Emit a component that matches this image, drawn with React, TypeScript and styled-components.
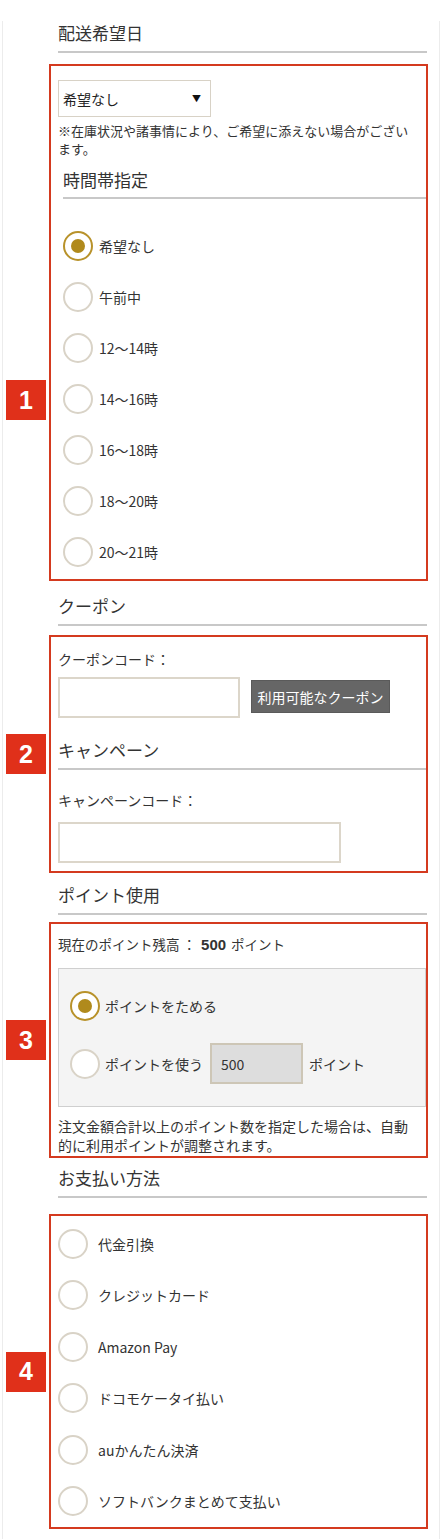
import styled, { createGlobalStyle } from "styled-components";

const GlobalStyle = createGlobalStyle`
  html, body {
    margin: 0;
    padding: 0;
    background: #fff;
  }
  body {
    font-family: "Noto Sans CJK JP", "Noto Sans", sans-serif;
    color: #333;
  }
  * {
    box-sizing: border-box;
  }
`;

const timeSlots = ["希望なし", "午前中", "12〜14時", "14〜16時", "16〜18時", "18〜20時", "20〜21時"];
const payments = [
  "代金引換",
  "クレジットカード",
  "Amazon Pay",
  "ドコモケータイ払い",
  "auかんたん決済",
  "ソフトバンクまとめて支払い",
];

export default function App() {
  return (
    <>
      <GlobalStyle />
      <Page>
        <SectionTitle $top={21}>配送希望日</SectionTitle>
        <Box $top={11}>
          <Badge $top={314}>1</Badge>
          <SelectBox>
            <span>希望なし</span>
            <Caret>▼</Caret>
          </SelectBox>
          <Note $size={13} $line={18} $top={5} $right={10}>
            ※在庫状況や諸事情により、ご希望に添えない場合がございます。
          </Note>
          <SubTitle $indent={5} $top={10} $bottom={5}>
            時間帯指定
          </SubTitle>
          <RadioList $top={21} $indent={5}>
            {timeSlots.map((t, i) => (
              <RadioRow key={t} $height={51} $gap={6}>
                <Radio $checked={i === 0} />
                <Label>{t}</Label>
              </RadioRow>
            ))}
          </RadioList>
          <Spacer $h={2} />
        </Box>

        <SectionTitle $top={13}>クーポン</SectionTitle>
        <Box $top={9}>
          <Badge>2</Badge>
          <FieldLabel $top={12}>クーポンコード：</FieldLabel>
          <InputRow $top={8}>
            <TextInput $width={182} readOnly />
            <DarkButton>利用可能なクーポン</DarkButton>
          </InputRow>
          <SubTitle $indent={0} $top={20} $bottom={6}>
            キャンペーン
          </SubTitle>
          <FieldLabel $top={20}>キャンペーンコード：</FieldLabel>
          <InputRow $top={12}>
            <TextInput $width={283} readOnly />
          </InputRow>
          <Spacer $h={8} />
        </Box>

        <SectionTitle $top={10}>ポイント使用</SectionTitle>
        <Box $top={7}>
          <Badge>3</Badge>
          <Balance>
            現在のポイント残高 ： <strong>500</strong> ポイント
          </Balance>
          <PointPanel>
            <RadioRow $height={41} $gap={5}>
              <Radio $checked />
              <Label>ポイントをためる</Label>
            </RadioRow>
            <RadioRow $height={41} $gap={5}>
              <Radio />
              <Label>ポイントを使う</Label>
              <PointInput value="500" readOnly />
              <Label>ポイント</Label>
            </RadioRow>
          </PointPanel>
          <Note $size={14} $line={19} $top={10} $right={8}>
            注文金額合計以上のポイント数を指定した場合は、自動的に利用ポイントが調整されます。
          </Note>
          <Spacer $h={1} />
        </Box>

        <SectionTitle $top={8}>お支払い方法</SectionTitle>
        <Box $top={16}>
          <Badge>4</Badge>
          <RadioList $top={2} $indent={0}>
            {payments.map((p) => (
              <RadioRow key={p} $height={51.5} $gap={10}>
                <Radio />
                <Label>{p}</Label>
              </RadioRow>
            ))}
          </RadioList>
        </Box>
      </Page>
    </>
  );
}

const Page = styled.div`
  width: 438px;
  min-height: 1539px;
  margin-left: 2px;
  padding: 0 11px 0 46px;
  border-left: 1px solid #ececec;
  border-right: 1px solid #ececec;
`;

const SectionTitle = styled.h2<{ $top: number }>`
  margin: ${(p) => p.$top}px 1px 0 9px;
  padding-bottom: 6px;
  font-size: 17px;
  line-height: 24px;
  font-weight: normal;
  color: #333;
  border-bottom: 2px solid #c8c8c8;
`;

const Box = styled.div<{ $top: number }>`
  position: relative;
  margin-top: ${(p) => p.$top}px;
  padding-left: 7px;
  border: 2px solid #d43a1f;
`;

const Badge = styled.div<{ $top?: number }>`
  position: absolute;
  left: -45px;
  top: ${(p) => (p.$top !== undefined ? `${p.$top}px` : "50%")};
  transform: ${(p) => (p.$top !== undefined ? "none" : "translateY(-50%)")};
  width: 40px;
  height: 40px;
  display: flex;
  align-items: center;
  justify-content: center;
  background: #e0301a;
  color: #fff;
  font-family: "Liberation Sans", Arial, sans-serif;
  font-weight: bold;
  font-size: 25px;
`;

const SelectBox = styled.div`
  margin-top: 14px;
  width: 153px;
  height: 37px;
  display: flex;
  align-items: center;
  justify-content: space-between;
  padding: 0 9px 0 4px;
  border: 1px solid #d8d2c6;
  font-size: 14px;
  color: #222;
`;

const Caret = styled.span`
  font-size: 9px;
  color: #111;
`;

const Note = styled.p<{ $size: number; $line: number; $top: number; $right: number }>`
  margin: ${(p) => p.$top}px 0 0;
  padding-right: ${(p) => p.$right}px;
  font-size: ${(p) => p.$size}px;
  line-height: ${(p) => p.$line}px;
  color: #333;
`;

const SubTitle = styled.h3<{ $indent: number; $top: number; $bottom: number }>`
  margin: ${(p) => p.$top}px 0 0 ${(p) => p.$indent}px;
  padding-bottom: ${(p) => p.$bottom}px;
  font-size: 17px;
  line-height: 24px;
  font-weight: normal;
  color: #333;
  border-bottom: 2px solid #c8c8c8;
`;

const RadioList = styled.div<{ $top: number; $indent: number }>`
  margin: ${(p) => p.$top}px 0 0 ${(p) => p.$indent}px;
  display: flex;
  flex-direction: column;
`;

const RadioRow = styled.div<{ $height: number; $gap: number }>`
  height: ${(p) => p.$height}px;
  display: flex;
  align-items: center;
  gap: ${(p) => p.$gap}px;
`;

const Radio = styled.span<{ $checked?: boolean }>`
  flex: none;
  width: 30px;
  height: 30px;
  border-radius: 50%;
  background: #fff;
  border: 2px solid ${(p) => (p.$checked ? "#b8922a" : "#d9d3c7")};
  display: flex;
  align-items: center;
  justify-content: center;
  &::after {
    content: "";
    display: ${(p) => (p.$checked ? "block" : "none")};
    width: 14px;
    height: 14px;
    border-radius: 50%;
    background: #b08a1c;
  }
`;

const Label = styled.span`
  font-size: 14px;
  color: #333;
  white-space: nowrap;
`;

const Spacer = styled.div<{ $h: number }>`
  height: ${(p) => p.$h}px;
`;

const FieldLabel = styled.div<{ $top: number }>`
  margin-top: ${(p) => p.$top}px;
  font-size: 14px;
  line-height: 20px;
  color: #333;
`;

const InputRow = styled.div<{ $top: number }>`
  margin-top: ${(p) => p.$top}px;
  display: flex;
  align-items: center;
  gap: 11px;
`;

const TextInput = styled.input<{ $width: number }>`
  width: ${(p) => p.$width}px;
  height: 41px;
  border: 2px solid #dcd6ca;
  background: #fff;
  outline: none;
  padding: 0 8px;
  font-size: 14px;
`;

const DarkButton = styled.button`
  width: 139px;
  height: 33px;
  padding: 0;
  border: 1px solid #5a5a5a;
  background: #666;
  color: #fff;
  font-family: "Noto Sans CJK JP", sans-serif;
  font-size: 14px;
  margin-top: -2px;
`;

const Balance = styled.div`
  margin-top: 10px;
  font-size: 13.5px;
  line-height: 20px;
  color: #333;
  strong {
    font-family: "Liberation Sans", Arial, sans-serif;
    font-size: 15px;
    margin: 0 2px;
  }
`;

const PointPanel = styled.div`
  margin-top: 13px;
  height: 139px;
  padding: 16px 12px 22px 11px;
  background: #f4f4f4;
  border: 1px solid #cfcfcf;
  display: flex;
  flex-direction: column;
  gap: 17px;
`;

const PointInput = styled.input`
  width: 93px;
  height: 41px;
  margin: 0 1px 0 2px;
  padding: 0 9px;
  border: 2px solid #cdc6b6;
  background: #dddddd;
  outline: none;
  font-family: "Noto Sans CJK JP", sans-serif;
  font-size: 14px;
  color: #333;
`;
